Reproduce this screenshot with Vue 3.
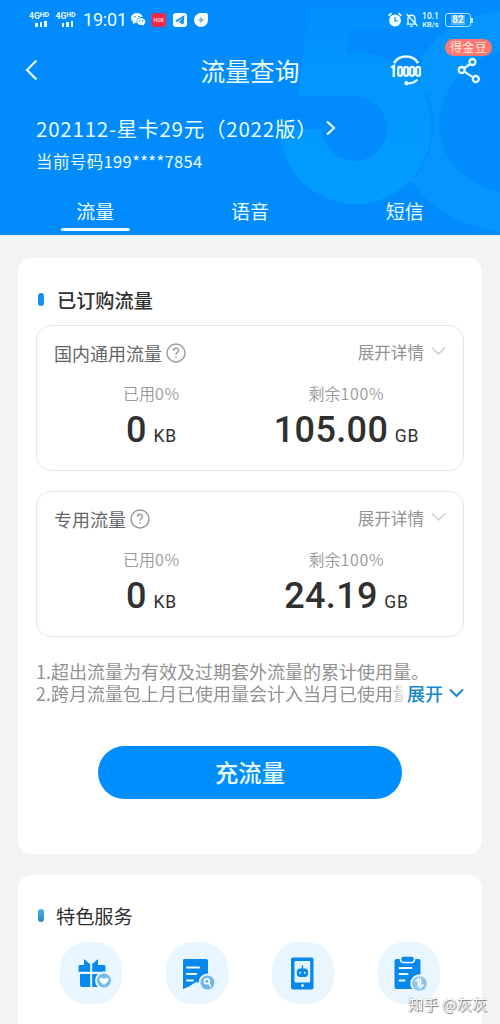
<script setup>
const tabs = ['流量', '语音', '短信']
const plans = [
  { name: '国内通用流量', used: '0', left: '105.00' },
  { name: '专用流量', used: '0', left: '24.19' },
]
const services = ['gift', 'bill', 'phone', 'clipboard']
</script>

<template>
  <div class="screen">
    <header class="hero">
      <svg class="art" width="500" height="235" viewBox="0 0 500 235">
        <defs>
          <linearGradient id="five" x1="0" y1="0" x2="0" y2="1">
            <stop offset="0" stop-color="#018dfe" />
            <stop offset=".35" stop-color="#0297ff" />
            <stop offset="1" stop-color="#029cff" />
          </linearGradient>
        </defs>
        <g fill="none" stroke="#1596fc" stroke-width="1" opacity=".4">
          <ellipse v-for="n in 13" :key="n" cx="125" cy="-20" :rx="n * 20" :ry="n * 11" />
        </g>
        <path d="M500 11C462 14 435 35 422 58L410 180C430 209 462 227 500 232V192C463 183 440 159 440 125C440 90 464 60 500 52Z" fill="#0495ff" />
        <path d="M426 94Q437 127 426 155L414 177" fill="none" stroke="#018dfc" stroke-width="4" />
        <path d="M309 5H446L440 29H350L346 53C396 47 431 84 431 128A75.500 75.500 0 0 1 280 129H322A32.500 32.500 0 1 0 355 96H298Z" fill="url(#five)" />
      </svg>

      <div class="status">
        <div v-for="n in 2" :key="n" class="signal">
          <span>4G<sup>HD</sup></span>
          <i><b></b><b></b><b></b></i>
        </div>
        <span class="clock">19:01</span>
        <svg class="apps" width="78" height="16" viewBox="0 0 78 16">
          <g fill="#f2ffff">
            <path d="M6 1C2.600 1 0 3.200 0 6c0 1.700.9 3 2.200 3.900L1.700 12l2.200-1.100 1.700.2C5 7.600 7.700 5 11.700 5 11 2.600 8.700 1 6 1Z" />
            <path d="M10 6c-2.300 0-4 1.500-4 3.600 0 2 1.700 3.500 4 3.500l1.500-.2 1.700.9-.4-1.500c1-.7 1.500-1.600 1.500-2.700C14.300 7.500 12.400 6 10 6Z" />
            <rect x="42" y="1" width="14" height="14" rx="3" />
            <path d="M70 1h5q2 0 2 3v4a7 7 0 1 1-7-7Z" />
          </g>
          <g fill="#168ee8">
            <circle cx="4" cy="4.700" r=".8" /><circle cx="8" cy="4.700" r=".8" />
            <circle cx="8.700" cy="8.700" r=".7" /><circle cx="11.700" cy="8.700" r=".7" />
            <path d="m53.500 3-9.500 6 2.500 1 5-4-3.500 4.500 4.500 2Z" />
          </g>
          <path d="M67.500 8h5M70 5.500v5" stroke="#76aab4" stroke-width="1.500" />
          <rect x="20.500" y="1" width="14.500" height="14" rx="3" fill="#f62848" />
          <text x="27.700" y="9.800" text-anchor="middle" class="hgr">HGR</text>
        </svg>
        <div class="status-right">
          <svg width="31" height="16" viewBox="0 0 31 16">
            <circle cx="7" cy="8.500" r="5.900" fill="#f2ffff" />
            <path d="m.7 3.800 2.800-2.600M13.300 3.800l-2.800-2.600" stroke="#f2ffff" stroke-width="1.800" />
            <path d="M7 5v4h3" fill="none" stroke="#168ee8" stroke-width="1.200" />
            <path d="M20 12V7c0-5 7-5 7 0v5M18.500 12.200h10M22 14.200h3M18.500 2l11 12" fill="none" stroke="#e8fdff" stroke-width="1.300" />
          </svg>
          <span class="rate"><span>10.1</span><br />KB/s</span>
          <span class="battery"><span>82</span></span>
        </div>
      </div>

      <div class="nav">
        <svg class="back" width="14" height="22" viewBox="0 0 14 22"><path d="M11.500 1.500 2 11l9.500 9.500" /></svg>
        <h1>流量查询</h1>
        <div class="actions">
          <svg width="34" height="32" viewBox="0 0 34 32" fill="none" stroke="#e8fdff">
            <path d="M5 9C8 4 12.500 2.500 17 2.500s9 1.500 12 6.500" stroke-width="2.700" />
            <path d="m2 13.500 2.800-1.500v11" stroke-width="2.500" />
            <rect x="9.200" y="12.800" width="3.800" height="9" rx="1.800" stroke-width="2.300" />
            <rect x="15.200" y="12.800" width="3.800" height="9" rx="1.800" stroke-width="2.300" />
            <rect x="21.200" y="12.800" width="3.800" height="9" rx="1.800" stroke-width="2.300" />
            <rect x="27.200" y="12.800" width="3.800" height="9" rx="1.800" stroke-width="2.300" />
            <path d="M28.500 25.500c-2.500 2.700-5 3.900-10 3.900" stroke-width="2.400" />
            <circle cx="17.500" cy="29.200" r="1.700" fill="#e8fdff" />
          </svg>
          <svg width="24" height="27" viewBox="0 0 24 27" fill="none" stroke="#e8fdff" stroke-width="2.300">
            <circle cx="15.500" cy="5" r="3" /><circle cx="4.700" cy="13" r="3" /><circle cx="18.800" cy="22" r="3" />
            <path d="m13.100 7-6 4.300M7.300 14.600l8.900 5.800" />
          </svg>
        </div>
        <span class="bean">得金豆</span>
      </div>

      <div class="plan">
        <span>202112-星卡29元（2022版）</span>
        <svg width="11" height="16" viewBox="0 0 11 16"><path d="m2 1.500 7 6.500-7 6.500" /></svg>
      </div>
      <div class="number">当前号码199****7854</div>
      <nav class="tabs">
        <span v-for="(tab, i) in tabs" :key="tab" :class="{ active: i === 0 }">{{ tab }}</span>
      </nav>
    </header>

    <main>
      <section class="card usage">
        <h2>已订购流量</h2>
        <article v-for="plan in plans" :key="plan.name" class="quota">
          <div class="quota-head">
            <span>{{ plan.name }}</span>
            <svg width="20" height="20" viewBox="0 0 20 20" fill="none" stroke="#989898">
              <circle cx="10" cy="10" r="9" stroke-width="1.400" />
              <path d="M7.500 7.700C7.500 4.300 12.600 4.500 12.500 7.500c0 2-2.500 2.200-2.500 4.300M10 13.400v1.500" stroke-width="1.400" />
            </svg>
            <span class="details">展开详情</span>
            <svg class="down" width="15" height="10" viewBox="0 0 15 10"><path d="m1 1.500 6.500 6.500L14 1.500" /></svg>
          </div>
          <div class="stats">
            <div class="stat"><small>已用<em>0%</em></small><p><strong>{{ plan.used }}</strong><span>KB</span></p></div>
            <div class="stat"><small>剩余<em>100%</em></small><p><strong>{{ plan.left }}</strong><span>GB</span></p></div>
          </div>
        </article>
        <div class="notes">
          <p>1.超出流量为有效及过期套外流量的累计使用量。</p>
          <div class="note-line">
            <p class="clipped">2.跨月流量包上月已使用量会计入当月已使用量</p>
            <span class="more">展开<svg width="15" height="10" viewBox="0 0 15 10"><path d="m1 1.500 6.500 6.500L14 1.500" /></svg></span>
          </div>
        </div>
        <button>充流量</button>
      </section>

      <section class="card services">
        <h2>特色服务</h2>
        <div class="service-row">
          <div v-for="service in services" :key="service" class="service">
            <svg v-if="service === 'gift'" width="62" height="62" viewBox="0 0 62 62">
              <path d="M18 23h6v-6l7 6 7-6v6h6q1.500 0 1.500 1.500V30h-27v-5.500Q18.500 23 20 23ZM20 32h24v11q0 2-2 2H22q-2 0-2-2Z" fill="#0788ed" />
              <path d="M31.200 22v23M18 30.800h27" stroke="#e9f6ff" stroke-width="2" />
              <circle cx="44" cy="38.500" r="8" fill="#76b9ed" stroke="#e9f6ff" stroke-width="2" />
              <path d="M44 43c-9-6-2.500-9 0-6 2.500-3 9 0 0 6Z" fill="#f2fbff" />
            </svg>
            <svg v-else-if="service === 'bill'" width="62" height="62" viewBox="0 0 62 62">
              <path d="M18 17h22q2 0 2 2v22h-9l-3-1-7 4.500-6 2.500V19q0-2 1-2Z" fill="#0788ed" />
              <path d="M21 25.500h12M21 32h9M21 38.500h6" stroke="#effaff" stroke-width="2" stroke-linecap="round" />
              <circle cx="41.500" cy="40.500" r="8" fill="#72b5e8" stroke="#e9f6ff" stroke-width="2" />
              <circle cx="40.800" cy="39.300" r="2.500" fill="none" stroke="#f2fbff" stroke-width="1.600" /><path d="m42.800 41.500 2 3" stroke="#f2fbff" stroke-width="1.600" />
            </svg>
            <svg v-else-if="service === 'phone'" width="62" height="62" viewBox="0 0 62 62">
              <rect x="19" y="15.500" width="22.500" height="32" rx="2" fill="#0788ed" />
              <rect x="22.500" y="19" width="15.700" height="21.500" rx="1" fill="#e3f4ff" />
              <rect x="24.800" y="26.500" width="11.300" height="8.500" rx="3.500" fill="#0788ed" /><path d="M30.500 23.500v4" stroke="#0788ed" stroke-width="1.400" />
              <circle cx="28.200" cy="30.700" r="1" fill="#e3f4ff" /><circle cx="32.800" cy="30.700" r="1" fill="#e3f4ff" /><circle cx="30.500" cy="43.500" r="1.500" fill="#e3f4ff" />
            </svg>
            <svg v-else width="62" height="62" viewBox="0 0 62 62">
              <rect x="16.500" y="17" width="26" height="30" rx="2" fill="#0788ed" />
              <rect x="22.500" y="14" width="14" height="6.500" rx="3" fill="#0788ed" stroke="#e9f6ff" stroke-width="1.500" />
              <path d="M21.500 26h12M21.500 32h8M21.500 38.500h5" stroke="#effaff" stroke-width="2" stroke-linecap="round" />
              <circle cx="41.500" cy="41.500" r="8.300" fill="#8dc2ee" stroke="#e9f6ff" stroke-width="2" />
              <path d="m37.500 39.500 3-3v9M45.500 42.500l-3 3v-9" fill="none" stroke="#f2fbff" stroke-width="1.700" />
            </svg>
          </div>
        </div>
      </section>
    </main>
    <div class="watermark">知乎 @灰灰</div>
  </div>
</template>

<style>
body { margin: 0; }
</style>

<style scoped>
.screen { position: relative; width: 500px; height: 1024px; overflow: hidden; background: #f3f3f3; color: #303030; font-family: "Noto Sans CJK SC", sans-serif; }
.screen * { box-sizing: border-box; }
p, h1, h2 { margin: 0; }
svg { display: block; flex: none; }
.hero { position: relative; height: 235px; background: #018bfd; color: #e9fdff; }
.art { position: absolute; inset: 0; }
.status { position: relative; display: flex; height: 40px; padding: 0 29px 0 29px; align-items: center; }
.signal { width: 22px; height: 16px; margin-right: 4.500px; font: 700 8.500px/8px Roboto, sans-serif; white-space: nowrap; }
.signal span { display: block; }
.signal sup { font-size: 7px; line-height: 0; vertical-align: 2px; }
.signal i { display: flex; gap: 2px; height: 6px; align-items: flex-end; margin: 1px 0 0 6px; }
.signal b { width: 2.500px; height: 4px; background: #e9fdff; }
.signal b:last-child { height: 6px; }
.signal b:nth-child(2) { height: 5px; }
.clock { width: 45px; margin-left: 1px; font: 400 18px/20px Roboto, sans-serif; letter-spacing: -.2px; white-space: nowrap; }
.apps { margin-left: 3px; }
.hgr { font: 700 5px Roboto, sans-serif; fill: #ffd8df; }
.status-right { display: flex; align-items: center; margin-left: auto; }
.rate { width: 17px; margin-left: 3px; text-align: center; font: 500 7.500px/8px Roboto, sans-serif; white-space: nowrap; }
.rate span { font-size: 8.500px; }
.battery { position: relative; display: flex; width: 26px; height: 14px; padding: 1px 5px; margin-left: 6px; border: 1.300px solid #a8e5ff; border-radius: 3px; }
.battery::after { position: absolute; right: -3px; top: 3.500px; width: 2px; height: 5px; background: #a8e5ff; content: ''; }
.battery span { width: 100%; background: #5ab3f5; text-align: center; font: 700 10px/10px Roboto, sans-serif; }
.nav { position: relative; display: flex; height: 64px; align-items: center; justify-content: center; }
.back { position: absolute; left: 25px; top: 19px; }
.back path, .plan path { fill: none; stroke: #e9fdff; stroke-width: 2.200; }
h1 { padding-bottom: 4px; font-size: 24.700px; font-weight: 400; line-height: 36px; }
.actions { position: absolute; left: 389px; top: 14px; display: flex; gap: 34px; }
.actions svg:last-child { margin-top: 3px; }
.bean { position: absolute; left: 445px; top: -1px; width: 47px; height: 17px; border-radius: 9px; background: #ff7772; color: #ffe8df; text-align: center; font-size: 12px; line-height: 16px; letter-spacing: .4px; }
.plan { position: relative; display: flex; height: 40px; padding: 7px 0 0 36px; align-items: center; font-size: 20.500px; line-height: 30px; letter-spacing: .78px; white-space: nowrap; }
.plan span { width: 289px; }
.number { position: relative; height: 34px; padding: 5px 0 0 36px; font-size: 16.500px; line-height: 24px; letter-spacing: .38px; }
.tabs { position: relative; display: grid; height: 57px; padding: 18px 18px 0; grid-template-columns: repeat(3, 1fr); text-align: center; font-size: 19px; line-height: 29px; }
.tabs .active::after { display: block; width: 69px; height: 2.500px; margin: 3px auto 0; border-radius: 2px; background: #e9fdff; content: ''; }
main { padding: 23px 18px 0; }
.card { border-radius: 14px; background: #fff; }
.usage { height: 596px; padding: 28px 18px 0; }
h2 { display: flex; align-items: center; gap: 13px; height: 28px; padding-left: 2px; font-size: 19.200px; font-weight: 500; line-height: 28px; }
h2::before { width: 6px; height: 13px; margin-top: -2px; border-radius: 3px; background: #168fe8; content: ''; }
.quota { height: 146px; margin-top: 11px; padding: 12px 17px 0; border: 1px solid #e5e5e5; border-radius: 15px; }
.quota + .quota { margin-top: 20px; }
.quota-head { display: flex; height: 30px; align-items: center; color: #666; font-size: 18px; }
.quota-head > svg:nth-child(2) { margin-left: 3.500px; }
.details { margin: -2px 0 0 auto; color: #929292; font-size: 16.600px; }
.down { margin: -4px 0 0 7px; }
.down path { fill: none; stroke: #ccc; stroke-width: 1.500; }
.stats { display: grid; grid-template-columns: 195px 195px; margin-top: 12px; text-align: center; }
.stat small { display: block; color: #999; font-size: 16px; font-weight: 350; line-height: 26px; }
.stat em { font-style: normal; letter-spacing: .7px; }
.stat p { display: flex; height: 44px; margin-top: 2px; align-items: baseline; justify-content: center; font: 500 36px/44px Roboto, sans-serif; }
.stat strong { font-weight: 500; letter-spacing: .35px; }
.stat span { margin-left: 6.500px; font: 400 17.500px/24px Roboto, sans-serif; letter-spacing: .8px; }
.notes { height: 44px; margin-top: 23px; color: #929292; font-size: 18px; line-height: 22px; white-space: nowrap; }
.note-line { display: flex; justify-content: space-between; }
.clipped { width: 367px; overflow: hidden; -webkit-mask-image: linear-gradient(90deg, #000 355px, #0003 367px); mask-image: linear-gradient(90deg, #000 355px, #0003 367px); }
.more { display: flex; gap: 6px; align-items: center; color: #1689cc; font-weight: 500; }
.more path { fill: none; stroke: #1689cc; stroke-width: 2; }
button { display: block; width: 304px; height: 53px; margin: 42px auto 0; padding: 0 0 2px; border: 0; border-radius: 27px; background: #008eff; color: #e9fdff; font: 500 23.300px/50px "Noto Sans CJK SC", sans-serif; }
.services { height: 180px; margin-top: 21px; padding: 27px 18px 0; }
.services h2 { font-weight: 400; gap: 12px; }
.services h2::before { background: linear-gradient(#45b4e9, #2785c8); }
.service-row { display: flex; gap: 44px; margin: 12px 0 0 24px; }
.service { width: 62px; height: 62px; border-radius: 27px; background: #e9f6ff; }
.watermark { position: absolute; left: 408px; top: 991px; color: #fff; font-size: 15.300px; line-height: 24px; white-space: nowrap; text-shadow: 1px 1px 1px #777, 0 0 1px #777; }
</style>
